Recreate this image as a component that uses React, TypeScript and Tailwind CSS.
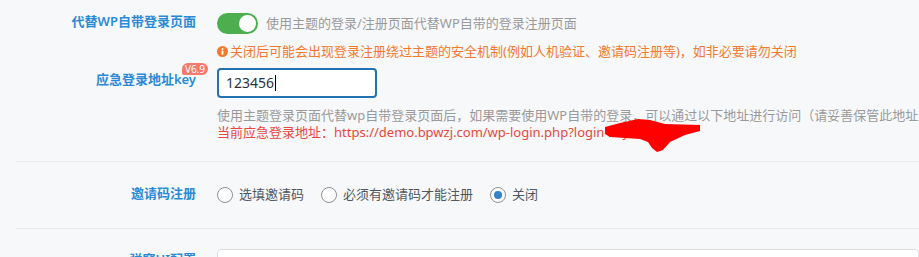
export default function App() {
  return (
    <div className="relative h-[257px] w-[919px] overflow-hidden bg-[#f7f8fa] pl-4 font-['Noto_Sans','Noto_Sans_CJK_SC',sans-serif] text-[13px]">
      {/* 登录页面设置 */}
      <div className="flex">
        <div className="w-[180px] shrink-0 pt-[11px] text-right font-semibold leading-5 text-[#2a8ad8]">
          代替WP自带登录页面
        </div>
        <div className="ml-[21px] pt-[13px]">
          <div className="flex items-center gap-2">
            <button type="button" className="flex h-[21px] w-[41px] items-center justify-end rounded-full bg-[#4cae4f] px-[2px]">
              <span className="h-[17px] w-[17px] rounded-full bg-white" />
            </button>
            <span className="text-[#9a9a9a]">使用主题的登录/注册页面代替WP自带的登录注册页面</span>
          </div>
          <div className="mt-2 flex items-center gap-[2px] leading-[18px] text-[#f3792f]">
            <svg width="11" height="11" viewBox="0 0 12 12">
              <circle cx="6" cy="6" r="6" fill="#f3792f" />
              <circle cx="6" cy="3.2" r="1.1" fill="#fff" />
              <rect x="5" y="5" width="2" height="4.6" rx="0.5" fill="#fff" />
            </svg>
            <span>关闭后可能会出现登录注册绕过主题的安全机制(例如人机验证、邀请码注册等)，如非必要请勿关闭</span>
          </div>
        </div>
      </div>

      <div className="flex">
        <div className="w-[180px] shrink-0 pt-[9px] text-right font-semibold leading-5 text-[#2a8ad8]">
          <span className="relative">
            应急登录地址key
            <span className="absolute -right-3 top-[-7px] rounded-[6px] rounded-bl-[2px] bg-[#f67a6c] px-[3px] text-[10px] font-normal leading-3 text-white">
              V6.9
            </span>
          </span>
        </div>
        <div className="ml-[21px] min-w-0 pt-2">
          <div className="flex h-[30px] w-[160px] items-center rounded-[4px] border-2 border-[#2271b1] bg-white pl-[7px] text-sm text-[#2c3338]">
            123456
            <span className="ml-[1px] h-4 w-px bg-black" />
          </div>
          <p className="mt-[9px] whitespace-nowrap leading-[17px] text-[#9a9a9a]">
            使用主题登录页面代替wp自带登录页面后，如果需要使用WP自带的登录，可以通过以下地址进行访问（请妥善保管此地址，忘记后将无法登录）
          </p>
          <p className="whitespace-nowrap leading-[17px] text-[#e8473b]">
            当前应急登录地址：https://demo.bpwzj.com/wp-login.php?login-key=123456
          </p>
        </div>
      </div>

      <div className="mt-5 border-t border-[#e8eaed]" />

      {/* 邀请码注册 */}
      <div className="flex h-[66px] items-center">
        <div className="w-[180px] shrink-0 pb-1 text-right font-semibold leading-5 text-[#2a8ad8]">邀请码注册</div>
        <div className="ml-[21px] flex items-center gap-[17px] text-[#50575e]">
          {[
            { label: "选填邀请码", checked: false },
            { label: "必须有邀请码才能注册", checked: false },
            { label: "关闭", checked: true },
          ].map((r) => (
            <label key={r.label} className="flex items-center gap-[6px]">
              <span className="flex h-4 w-4 items-center justify-center rounded-full border border-[#8c8f94] bg-white">
                {r.checked && <span className="h-2 w-2 rounded-full bg-[#3582c4]" />}
              </span>
              {r.label}
            </label>
          ))}
        </div>
      </div>

      <div className="border-t border-[#e8eaed]" />

      {/* 弹窗UI配置 */}
      <div className="flex pt-5">
        <div className="w-[180px] shrink-0 text-right font-semibold leading-5 text-[#2a8ad8]">弹窗UI配置</div>
        <div className="ml-[21px] h-[60px] flex-1 rounded-[4px] border border-[#dcdcde] bg-white" />
      </div>

      {/* 红色涂抹 */}
      <svg className="absolute left-[600px] top-[112px]" width="104" height="44" viewBox="0 0 104 44">
        <polygon
          points="5,15 20,11 38,7 50,8 65,12 100,13 100,19 85,23 70,30 63,38 57,40 52,36 48,30 40,27 25,26 10,25 5,22"
          fill="#ff0000"
        />
      </svg>
    </div>
  );
}
